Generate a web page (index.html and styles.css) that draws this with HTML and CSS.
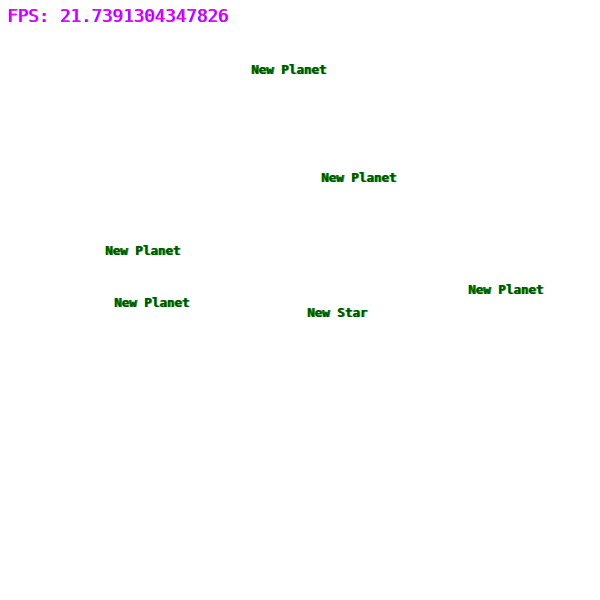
FILE: index.html
```html
<!DOCTYPE html>
<html>
<head>
<meta charset="utf-8">
<link rel="stylesheet" href="styles.css">
</head>
<body>
<div class="scene">
  <div class="fps">FPS: 21.7391304347826</div>
  <div class="label" style="left:251px;top:63px">New Planet</div>
  <div class="label" style="left:321px;top:171px">New Planet</div>
  <div class="label" style="left:105px;top:244px">New Planet</div>
  <div class="label" style="left:468px;top:283px">New Planet</div>
  <div class="label" style="left:114px;top:296px">New Planet</div>
  <div class="label" style="left:307px;top:306px">New Star</div>
</div>
</body>
</html>
```
FILE: styles.css
```css
html, body {
  margin: 0;
  padding: 0;
  background: #ffffff;
}
.scene {
  position: relative;
  width: 600px;
  height: 600px;
  overflow: hidden;
}
.fps {
  padding: 5px 0 0 8px;
  font-family: "DejaVu Sans Mono", monospace;
  font-size: 17.5px;
  line-height: 22px;
  color: #ff00ff;
  text-shadow: -1px 0 0 #3030ff;
  white-space: nowrap;
}
.label {
  position: absolute;
  font-family: "DejaVu Sans Mono", monospace;
  font-weight: bold;
  font-size: 12.5px;
  line-height: 14px;
  color: #005000;
  text-shadow: 1px 0 0 #00a000;
  white-space: nowrap;
}
```
